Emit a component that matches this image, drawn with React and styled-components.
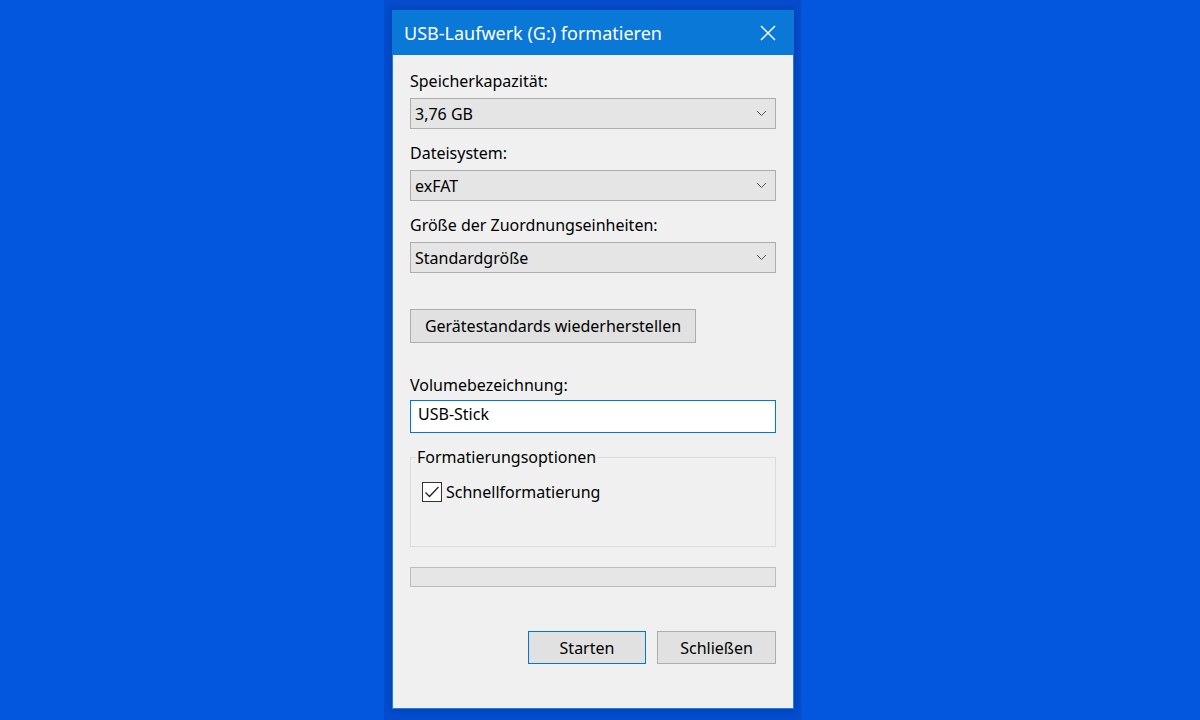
import React from 'react';
import styled, { createGlobalStyle } from 'styled-components';

const GlobalStyle = createGlobalStyle`
  html, body {
    margin: 0;
    padding: 0;
    background-color: #0257de;
  }
  body {
    font-family: "Noto Sans", "Open Sans", sans-serif;
    color: #000;
  }
`;

const Desktop = styled.div`
  width: 1200px;
  height: 720px;
  display: flex;
  justify-content: flex-start;
  padding-left: 384px;
  box-sizing: border-box;
  overflow: hidden;
`;

const Shade = styled.div`
  width: 417px;
  height: 720px;
  background-color: #044ccb;
  padding: 10px 0 0 8px;
  box-sizing: border-box;
`;

const Window = styled.div`
  width: 402px;
  height: 699px;
  display: flex;
  flex-direction: column;
  border: 1px solid #1a82de;
  border-top: none;
  background-color: #f0f0f0;
  box-sizing: border-box;
  box-shadow: 0 0 6px rgba(0, 30, 110, 0.35);
`;

const TitleBar = styled.div`
  height: 45px;
  margin: 0 -1px;
  background-color: #0a78d7;
  display: flex;
  align-items: center;
  justify-content: space-between;
  padding: 0 18px 0 12px;
  color: #fff;
  font-size: 18px;
`;

const Body = styled.div`
  flex: 1;
  display: flex;
  flex-direction: column;
  padding: 15px 17px 0 17px;
`;

const Label = styled.div`
  font-size: 16px;
  line-height: 22px;
  margin-top: ${(p) => p.$top || 0}px;
  margin-bottom: ${(p) => p.$gap ?? 6}px;
`;

const Combo = styled.div`
  height: 31px;
  box-sizing: border-box;
  background-color: #e5e5e5;
  border: 1px solid #adadad;
  display: flex;
  align-items: center;
  justify-content: space-between;
  padding: 0 8px 0 4px;
  font-size: 16px;
`;

const Button = styled.div`
  height: ${(p) => p.$h || 33}px;
  box-sizing: border-box;
  background-color: #e1e1e1;
  border: 1px solid ${(p) => (p.$focus ? '#0078d7' : '#adadad')};
  display: flex;
  align-items: center;
  justify-content: center;
  font-size: 16px;
  width: ${(p) => p.$w}px;
`;

const ResetRow = styled.div`
  margin-top: 36px;
  display: flex;
`;

const TextBox = styled.div`
  height: 33px;
  box-sizing: border-box;
  background-color: #fff;
  border: 1px solid #0078d7;
  display: flex;
  align-items: center;
  padding: 0 0 5px 7px;
  font-size: 16px;
`;

const Group = styled.fieldset`
  margin: 13px 0 0 0;
  padding: 0;
  border: 1px solid #dcdcdc;
  height: 101px;
  box-sizing: border-box;
  min-width: 0;
`;

const Legend = styled.legend`
  font-size: 16px;
  line-height: 22px;
  padding: 0 1px;
  margin-left: 5px;
`;

const CheckRow = styled.label`
  display: flex;
  align-items: center;
  gap: 4px;
  margin: 13px 0 0 11px;
  font-size: 16px;
  line-height: 22px;
`;

const CheckBox = styled.span`
  width: 20px;
  height: 20px;
  box-sizing: border-box;
  border: 1px solid #333;
  background-color: #fff;
  display: flex;
  align-items: center;
  justify-content: center;
`;

const Progress = styled.div`
  margin-top: 20px;
  height: 20px;
  box-sizing: border-box;
  background-color: #e6e6e6;
  border: 1px solid #bcbcbc;
`;

const Footer = styled.div`
  margin-top: 44px;
  display: flex;
  justify-content: flex-end;
  gap: 11px;
`;

const Chevron = () => (
  <svg width="11" height="7" viewBox="0 0 11 7">
    <path d="M1 1 L5.5 5.5 L10 1" fill="none" stroke="#555" strokeWidth="1" />
  </svg>
);

const CloseIcon = () => (
  <svg width="16" height="16" viewBox="0 0 16 16">
    <path d="M1 1 L15 15 M15 1 L1 15" stroke="#fff" strokeWidth="1.5" />
  </svg>
);

const Check = () => (
  <svg width="16" height="14" viewBox="0 0 16 14">
    <path d="M1.5 7.5 L5.5 11.5 L14.5 2" fill="none" stroke="#222" strokeWidth="1.3" />
  </svg>
);

function Field({ label, value, top }) {
  return (
    <>
      <Label $top={top}>{label}</Label>
      <Combo>
        <span>{value}</span>
        <Chevron />
      </Combo>
    </>
  );
}

export default function App() {
  return (
    <Desktop>
      <GlobalStyle />
      <Shade>
        <Window>
          <TitleBar>
            <span>USB-Laufwerk (G:) formatieren</span>
            <CloseIcon />
          </TitleBar>
          <Body>
            <Field label="Speicherkapazität:" value="3,76 GB" />
            <Field label="Dateisystem:" value="exFAT" top={13} />
            <Field label="Größe der Zuordnungseinheiten:" value="Standardgröße" top={13} />
            <ResetRow>
              <Button $w={286} $h={34}>Gerätestandards wiederherstellen</Button>
            </ResetRow>
            <Label $top={31} $gap={4}>Volumebezeichnung:</Label>
            <TextBox>USB-Stick</TextBox>
            <Group>
              <Legend>Formatierungsoptionen</Legend>
              <CheckRow>
                <CheckBox>
                  <Check />
                </CheckBox>
                Schnellformatierung
              </CheckRow>
            </Group>
            <Progress />
            <Footer>
              <Button $w={118} $focus>Starten</Button>
              <Button $w={119}>Schließen</Button>
            </Footer>
          </Body>
        </Window>
      </Shade>
    </Desktop>
  );
}
